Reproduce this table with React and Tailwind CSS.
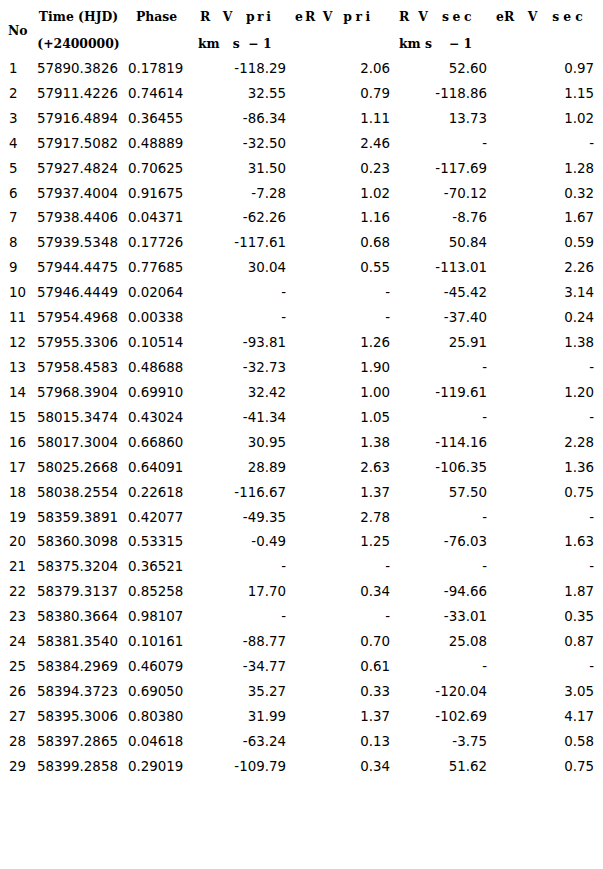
import React from "react";

const rows = [
  ["1","57890.3826","0.17819","-118.29","2.06","52.60","0.97"],
  ["2","57911.4226","0.74614","32.55","0.79","-118.86","1.15"],
  ["3","57916.4894","0.36455","-86.34","1.11","13.73","1.02"],
  ["4","57917.5082","0.48889","-32.50","2.46","-","-"],
  ["5","57927.4824","0.70625","31.50","0.23","-117.69","1.28"],
  ["6","57937.4004","0.91675","-7.28","1.02","-70.12","0.32"],
  ["7","57938.4406","0.04371","-62.26","1.16","-8.76","1.67"],
  ["8","57939.5348","0.17726","-117.61","0.68","50.84","0.59"],
  ["9","57944.4475","0.77685","30.04","0.55","-113.01","2.26"],
  ["10","57946.4449","0.02064","-","-","-45.42","3.14"],
  ["11","57954.4968","0.00338","-","-","-37.40","0.24"],
  ["12","57955.3306","0.10514","-93.81","1.26","25.91","1.38"],
  ["13","57958.4583","0.48688","-32.73","1.90","-","-"],
  ["14","57968.3904","0.69910","32.42","1.00","-119.61","1.20"],
  ["15","58015.3474","0.43024","-41.34","1.05","-","-"],
  ["16","58017.3004","0.66860","30.95","1.38","-114.16","2.28"],
  ["17","58025.2668","0.64091","28.89","2.63","-106.35","1.36"],
  ["18","58038.2554","0.22618","-116.67","1.37","57.50","0.75"],
  ["19","58359.3891","0.42077","-49.35","2.78","-","-"],
  ["20","58360.3098","0.53315","-0.49","1.25","-76.03","1.63"],
  ["21","58375.3204","0.36521","-","-","-","-"],
  ["22","58379.3137","0.85258","17.70","0.34","-94.66","1.87"],
  ["23","58380.3664","0.98107","-","-","-33.01","0.35"],
  ["24","58381.3540","0.10161","-88.77","0.70","25.08","0.87"],
  ["25","58384.2969","0.46079","-34.77","0.61","-","-"],
  ["26","58394.3723","0.69050","35.27","0.33","-120.04","3.05"],
  ["27","58395.3006","0.80380","31.99","1.37","-102.69","4.17"],
  ["28","58397.2865","0.04618","-63.24","0.13","-3.75","0.58"],
  ["29","58399.2858","0.29019","-109.79","0.34","51.62","0.75"],
];

const grid = "grid grid-cols-[29px_91px_70px_88px_104px_97px_107px]";
const serif = "font-['DejaVu_Serif',serif] font-bold text-[12.4px] text-black";
const h1 = "h-[32px] flex items-center pt-[2px] whitespace-pre";
const h2 = "h-[24.5px] flex items-center whitespace-pre";

export default function App() {
  return (
    <div className="w-[603px] h-[869px] bg-white pl-[8px]">
      <div className={grid + " " + serif}>
        <div className="row-span-2 flex items-center pt-[6px]">No</div>
        <div className={h1 + " justify-center pr-[8px]"}>Time (HJD)</div>
        <div className={h1 + " justify-center pr-[13px]"}>Phase</div>
        <div className={h1 + " pl-[2px]"}>
          <span>R</span>
          <span className="ml-[12.5px]">V</span>
          <span className="ml-[13.5px] tracking-[2.5px]">pri</span>
        </div>
        <div className={h1 + " pl-[9px]"}>
          <span>e</span>
          <span className="ml-[2px]">R</span>
          <span className="ml-[7.5px]">V</span>
          <span className="ml-[11px] tracking-[3.5px]">pri</span>
        </div>
        <div className={h1 + " pl-[9px]"}>
          <span>R</span>
          <span className="ml-[9px]">V</span>
          <span className="ml-[14px] tracking-[3.6px]">sec</span>
        </div>
        <div className={h1 + " pl-[9px]"}>
          <span>eR</span>
          <span className="ml-[13.5px]">V</span>
          <span className="ml-[15px] tracking-[4px]">sec</span>
        </div>
        <div className={h2 + " justify-center pr-[8px]"}>(+2400000)</div>
        <div className={h2}></div>
        <div className={h2}>km   s  − 1</div>
        <div className={h2}></div>
        <div className={h2 + " pl-[9px]"}>
          <span>km s</span>
          <span className="ml-[17px]">−</span>
          <span className="ml-[4px]">1</span>
        </div>
        <div className={h2}></div>
      </div>
      <div className="font-['DejaVu_Sans',sans-serif] text-[13.4px] text-black">
        {rows.map((r) => (
          <div key={r[0]} className={grid + " h-[24.93px] items-center"}>
            <div className="pl-[1px]">{r[0]}</div>
            <div>{r[1]}</div>
            <div>{r[2]}</div>
            <div className="text-right">{r[3]}</div>
            <div className="text-right">{r[4]}</div>
            <div className="text-right">{r[5]}</div>
            <div className="text-right">{r[6]}</div>
          </div>
        ))}
      </div>
    </div>
  );
}
